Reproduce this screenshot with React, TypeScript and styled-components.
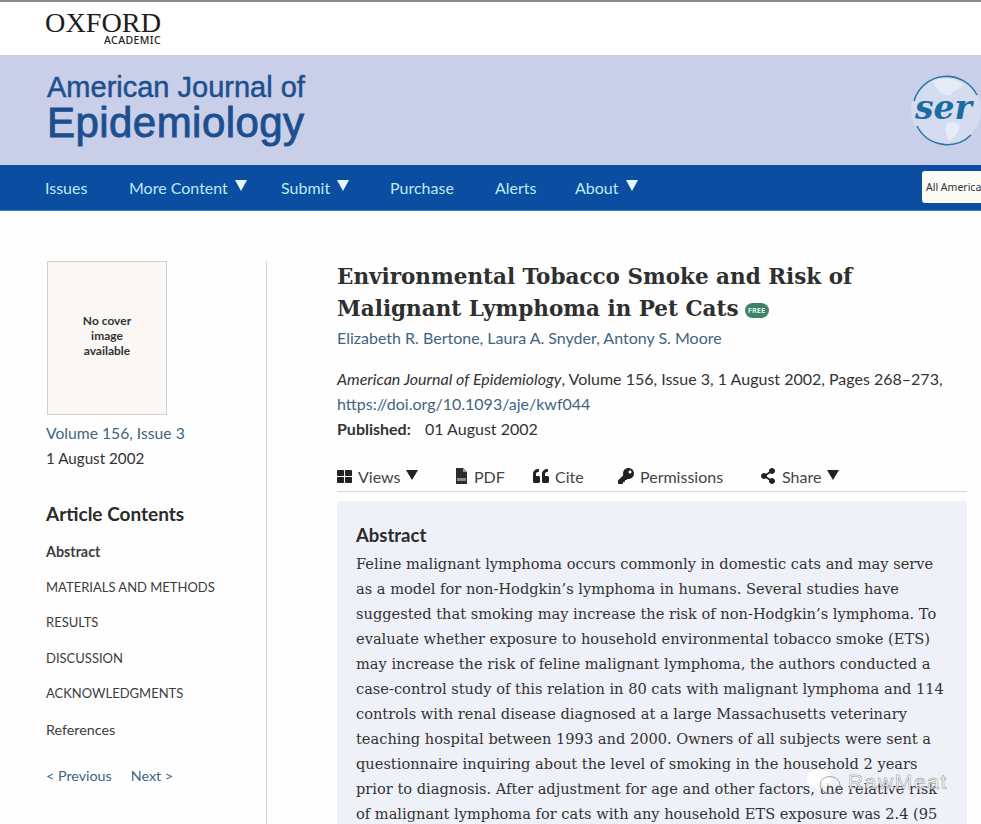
import styled, { createGlobalStyle } from "styled-components";
import { FaKey, FaQuoteLeft, FaShareAlt, FaThLarge } from "react-icons/fa";

const sans = `"Lato", "Noto Sans", sans-serif`;
const serif = `"DejaVu Serif", "Liberation Serif", serif`;

const Global = createGlobalStyle`
    html, body {
        margin: 0;
        height: 824px;
        overflow: hidden;
        background: #fefefe;
    }
`;

const Page = styled.div`
    width: 981px;
    height: 824px;
    overflow: hidden;
    position: relative;
    font-family: ${sans};
    color: #2a2a2a;
`;

const TopBar = styled.header`
    box-sizing: border-box;
    height: 55px;
    border-top: 2px solid #8a8a8a;
    padding: 9px 0 0 45px;
    background: #fff;
`;

const OxfordMark = styled.div`
    width: 116px;
    display: flex;
    flex-direction: column;
    align-items: flex-end;
`;

const OxfordWord = styled.div`
    font-family: "Liberation Serif", serif;
    font-size: 28.2px;
    line-height: 24px;
    height: 24px;
    color: #1d1d1f;
    white-space: nowrap;
`;

const AcademicWord = styled.div`
    font-family: "Noto Sans", sans-serif;
    font-size: 10.5px;
    font-weight: 500;
    line-height: 11px;
    letter-spacing: 0.4px;
    color: #1d1d1f;
`;

const JournalBand = styled.div`
    box-sizing: border-box;
    height: 110px;
    background: #c9cfe9;
    padding: 16px 0 0 47px;
    display: flex;
    justify-content: space-between;
`;

const JournalTitle = styled.div`
    font-family: "Liberation Sans", sans-serif;
    color: #1d4f8f;
    -webkit-text-stroke: 0.5px #1d4f8f;
`;

const JournalLine = styled.div`
    font-size: 29px;
    line-height: 32px;
`;

const JournalName = styled.div`
    font-size: 42px;
    line-height: 40px;
    letter-spacing: 0.45px;
    -webkit-text-stroke: 0.9px #1d4f8f;
`;

const SocietyLogo = styled.svg`
    width: 72px;
    height: 74px;
    margin-top: 2px;
    flex: none;
`;

const Nav = styled.nav`
    box-sizing: border-box;
    height: 46px;
    background: #0a4da1;
    border-bottom: 1px solid #3f7fc4;
    padding-left: 45px;
    display: flex;
    align-items: center;
    justify-content: space-between;
`;

const NavItems = styled.div`
    display: flex;
`;

const NavItem = styled.span<{ $width: number }>`
    display: flex;
    align-items: center;
    gap: 7px;
    width: ${props => props.$width}px;
    font-size: 16px;
    color: #bdeaf5;
`;

const NavCaret = styled.span`
    width: 0;
    height: 0;
    margin-top: -5px;
    border-left: 6.5px solid transparent;
    border-right: 6.5px solid transparent;
    border-top: 11px solid #e6f6fb;
`;

const SearchBox = styled.div`
    box-sizing: border-box;
    width: 59px;
    height: 32px;
    margin-top: -1px;
    padding-left: 4px;
    background: #fbfaf5;
    border-radius: 3px 0 0 3px;
    font-family: "Noto Sans", sans-serif;
    font-size: 10.5px;
    line-height: 32px;
    white-space: nowrap;
    overflow: hidden;
    color: #333;
`;

const Body = styled.div`
    display: flex;
    padding-top: 50px;
`;

const Sidebar = styled.aside`
    box-sizing: border-box;
    width: 267px;
    height: 563px;
    padding-left: 46px;
    border-right: 1px solid #d4d4d4;
    flex: none;
`;

const Cover = styled.div`
    box-sizing: border-box;
    width: 120px;
    height: 154px;
    margin-left: 1px;
    padding-bottom: 6px;
    border: 1px solid #d2d0ce;
    background: #fbf7f5;
    display: flex;
    align-items: center;
    justify-content: center;
    text-align: center;
    font-size: 12px;
    line-height: 15px;
    font-weight: 700;
    color: #333;
`;

const IssueLink = styled.div`
    margin-top: 6px;
    font-size: 15.7px;
    line-height: 25px;
    color: #41657f;
`;

const IssueDate = styled.div`
    font-size: 15.2px;
    line-height: 25px;
    color: #333;
`;

const ContentsHeading = styled.div`
    margin-top: 31px;
    font-size: 19px;
    line-height: 24px;
    font-weight: 700;
    color: #2b2b2b;
`;

const ContentsList = styled.ul`
    list-style: none;
    margin: 8px 0 0;
    padding: 0;
`;

const ContentsItem = styled.li<{ $active?: boolean, $caps?: boolean }>`
    height: 35.6px;
    line-height: 35.6px;
    font-size: ${props => props.$caps ? 13 : 14.3}px;
    font-weight: ${props => props.$active ? 700 : 400};
    color: #3c3c3c;
`;

const Pager = styled.div`
    display: flex;
    gap: 19px;
    margin-top: 18px;
    font-size: 14.3px;
    line-height: 20px;
    color: #41657f;
`;

const Main = styled.main`
    margin-left: 70px;
    width: 630px;
    flex: none;
`;

const Title = styled.h1`
    margin: 0;
    font-family: ${serif};
    font-size: 21.5px;
    line-height: 32px;
    font-weight: 700;
    color: #2f2f2f;
    white-space: nowrap;
`;

const FreeBadge = styled.span`
    display: inline-block;
    width: 24px;
    height: 15px;
    margin-left: 6px;
    border-radius: 8px;
    background: #3e8268;
    color: #d5f0e4;
    font-family: "Noto Sans", sans-serif;
    font-size: 7.5px;
    font-weight: 700;
    line-height: 15px;
    text-align: center;
    vertical-align: 3px;
`;

const Authors = styled.div`
    margin-top: 1px;
    font-size: 16px;
    line-height: 24px;
    color: #41657f;
`;

const Citation = styled.div`
    margin-top: 16px;
    font-size: 16px;
    line-height: 25px;
    color: #333;
`;

const CitationLink = styled.div`
    color: #41657f;
`;

const Published = styled.div`
    display: flex;
    gap: 9px;
`;

const PublishedLabel = styled.b`
    width: 79px;
    white-space: nowrap;
`;

const Toolbar = styled.div`
    display: flex;
    align-items: center;
    height: 30px;
    margin-top: 20px;
    border-bottom: 1px solid #d9d9d9;
    font-size: 16px;
    color: #444;
`;

const Tool = styled.span<{ $width: number }>`
    display: flex;
    align-items: center;
    gap: 6px;
    width: ${props => props.$width}px;
    flex: none;
    svg {
        color: #222;
        flex: none;
    }
`;

const ToolCaret = styled.span`
    width: 0;
    height: 0;
    margin-top: -3px;
    border-left: 6.5px solid transparent;
    border-right: 6.5px solid transparent;
    border-top: 10px solid #222;
`;

const AbstractBox = styled.section`
    box-sizing: border-box;
    margin-top: 9px;
    padding: 21px 19px 0;
    height: 340px;
    background: #eef1f8;
`;

const AbstractHeading = styled.h2`
    margin: 0 0 3px;
    font-family: ${sans};
    font-size: 18.5px;
    line-height: 26px;
    font-weight: 700;
    color: #2b2b2b;
`;

const AbstractLine = styled.div`
    font-family: ${serif};
    font-size: 14.6px;
    line-height: 25px;
    color: #333;
    white-space: nowrap;
`;

const Watermark = styled.div`
    position: absolute;
    left: 806px;
    top: 768px;
    display: flex;
    align-items: center;
    gap: 6px;
    color: rgba(255, 255, 255, 0.85);
    font-family: "Liberation Sans", sans-serif;
    font-size: 21px;
    letter-spacing: 1.6px;
    -webkit-text-stroke: 0.5px rgba(110, 110, 110, 0.8);
`;

const lines = [
    "Feline malignant lymphoma occurs commonly in domestic cats and may serve",
    "as a model for non-Hodgkin’s lymphoma in humans. Several studies have",
    "suggested that smoking may increase the risk of non-Hodgkin’s lymphoma. To",
    "evaluate whether exposure to household environmental tobacco smoke (ETS)",
    "may increase the risk of feline malignant lymphoma, the authors conducted a",
    "case-control study of this relation in 80 cats with malignant lymphoma and 114",
    "controls with renal disease diagnosed at a large Massachusetts veterinary",
    "teaching hospital between 1993 and 2000. Owners of all subjects were sent a",
    "questionnaire inquiring about the level of smoking in the household 2 years",
    "prior to diagnosis. After adjustment for age and other factors, the relative risk",
    "of malignant lymphoma for cats with any household ETS exposure was 2.4 (95",
];

const contents = ["MATERIALS AND METHODS", "RESULTS", "DISCUSSION", "ACKNOWLEDGMENTS"];

function PdfIcon() {
    return <svg width="13" height="16" viewBox="0 0 13 16">
        <path d="M1 0h7l4 4v12H1z" fill="#2b2b2b"/>
        <path d="M8 0v4h4z" fill="#999"/>
        <rect x="2" y="10" width="9" height="3" fill="#8d8d8d"/>
    </svg>;
}

export default function App() {
    return <Page>
        <Global/>
        <TopBar>
            <OxfordMark>
                <OxfordWord>OXFORD</OxfordWord>
                <AcademicWord>ACADEMIC</AcademicWord>
            </OxfordMark>
        </TopBar>
        <JournalBand>
            <JournalTitle>
                <JournalLine>American Journal of</JournalLine>
                <JournalName>Epidemiology</JournalName>
            </JournalTitle>
            <SocietyLogo viewBox="0 0 72 74">
                <circle cx="37" cy="37" r="35" fill="#d5dcef"/>
                <path d="M24 8c10-5 24-3 30 4-4 6-10 4-12 10-8 2-14-4-18-14zM38 50c8-2 14 0 12 6-2 6-8 12-10 12-2-6-6-14-2-18z" fill="#e6ebf6"/>
                <path d="M5 28A34 34 0 0 1 68 22" fill="none" stroke="#2b76a6" strokeWidth="1.6"/>
                <path d="M8 53A34 34 0 0 0 62 62" fill="none" stroke="#2b76a6" strokeWidth="1.6"/>
                <text x="6" y="46" fontFamily="DejaVu Serif, serif" fontStyle="italic" fontWeight="700" fontSize="33" fill="#1b6c9f">ser</text>
            </SocietyLogo>
        </JournalBand>
        <Nav>
            <NavItems>
                <NavItem $width={84}>Issues</NavItem>
                <NavItem $width={152}>More Content <NavCaret/></NavItem>
                <NavItem $width={109}>Submit <NavCaret/></NavItem>
                <NavItem $width={105}>Purchase</NavItem>
                <NavItem $width={80}>Alerts</NavItem>
                <NavItem $width={70}>About <NavCaret/></NavItem>
            </NavItems>
            <SearchBox>All American</SearchBox>
        </Nav>
        <Body>
            <Sidebar>
                <Cover>No cover<br/>image<br/>available</Cover>
                <IssueLink>Volume 156, Issue 3</IssueLink>
                <IssueDate>1 August 2002</IssueDate>
                <ContentsHeading>Article Contents</ContentsHeading>
                <ContentsList>
                    <ContentsItem $active>Abstract</ContentsItem>
                    {contents.map(item => <ContentsItem key={item} $caps>{item}</ContentsItem>)}
                    <ContentsItem>References</ContentsItem>
                </ContentsList>
                <Pager><span>&lt; Previous</span><span>Next &gt;</span></Pager>
            </Sidebar>
            <Main>
                <Title>Environmental Tobacco Smoke and Risk of<br/>Malignant Lymphoma in Pet Cats<FreeBadge>FREE</FreeBadge></Title>
                <Authors>Elizabeth R. Bertone, Laura A. Snyder, Antony S. Moore</Authors>
                <Citation>
                    <div><i>American Journal of Epidemiology</i>, Volume 156, Issue 3, 1 August 2002, Pages 268–273,</div>
                    <CitationLink>https://doi.org/10.1093/aje/kwf044</CitationLink>
                    <Published><PublishedLabel>Published:</PublishedLabel><span>01 August 2002</span></Published>
                </Citation>
                <Toolbar>
                    <Tool $width={118}><FaThLarge size={15}/>Views <ToolCaret/></Tool>
                    <Tool $width={78}><PdfIcon/>PDF</Tool>
                    <Tool $width={85}><FaQuoteLeft size={16}/>Cite</Tool>
                    <Tool $width={142}><FaKey size={16}/>Permissions</Tool>
                    <Tool $width={90}><FaShareAlt size={16}/>Share <ToolCaret/></Tool>
                </Toolbar>
                <AbstractBox>
                    <AbstractHeading>Abstract</AbstractHeading>
                    {lines.map(line => <AbstractLine key={line}>{line}</AbstractLine>)}
                </AbstractBox>
            </Main>
        </Body>
        <Watermark>
            <svg width="36" height="28" viewBox="0 0 36 28">
                <ellipse cx="13" cy="11" rx="12" ry="10" fill="rgba(255,255,255,0.85)"/>
                <ellipse cx="24" cy="17" rx="10" ry="8.5" fill="none" stroke="rgba(150,150,150,0.8)" strokeWidth="1"/>
            </svg>
            RawMeat
        </Watermark>
    </Page>;
}
